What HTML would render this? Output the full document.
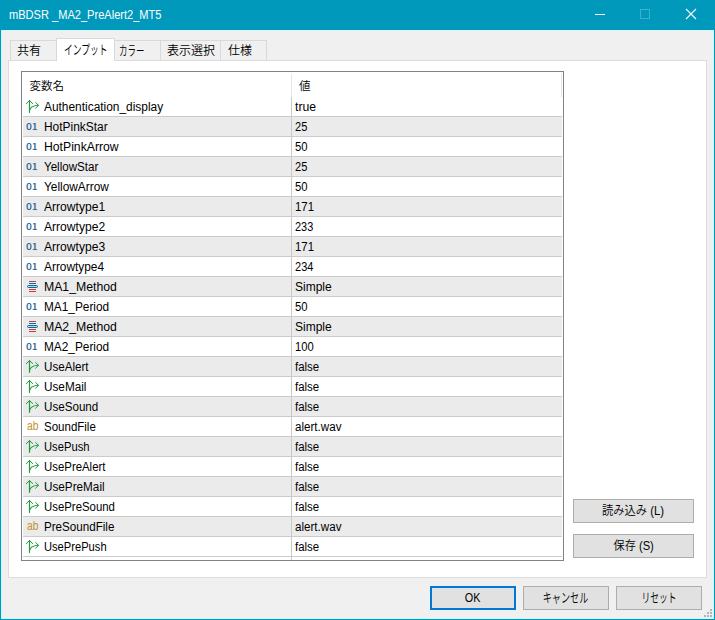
<!DOCTYPE html>
<html lang="ja">
<head>
<meta charset="utf-8">
<title>mBDSR _MA2_PreAlert2_MT5</title>
<style>
html,body{margin:0;padding:0;}
body{width:715px;height:620px;overflow:hidden;background:#f0f0f0;position:relative;
 font-family:"Liberation Sans","Noto Sans CJK JP",sans-serif;font-size:12px;color:#000;font-weight:350;}
div,span{box-sizing:border-box;}
.abs{position:absolute;}
#win{position:absolute;left:0;top:0;width:715px;height:620px;background:#f0f0f0;overflow:hidden;}
#tbar{position:absolute;left:0;top:0;width:715px;height:30px;background:#0099bc;}
#ttl{position:absolute;left:9px;top:7px;color:#fff;font-size:12px;line-height:16px;white-space:nowrap;transform:scaleX(0.922);transform-origin:0 50%;}
.bl{position:absolute;background:#0099bc;}
.bli{position:absolute;background:#c9f6ff;}
.tab{position:absolute;top:40px;height:21px;background:#f0f0f0;border:1px solid #d9d9d9;border-bottom:none;line-height:20px;white-space:nowrap;padding-left:6px;}
.tab.sel{top:38px;height:23px;background:#fff;z-index:3;line-height:21px;}
.kana{display:inline-block;transform-origin:0 50%;}
.btn .kana,.btn .sx{transform-origin:50% 50%;}
.sx{display:inline-block;transform-origin:0 50%;}
#panel{position:absolute;left:8px;top:60px;width:699px;height:518px;background:#fff;border:1px solid #dcdcdc;}
#tbl{position:absolute;left:21px;top:71px;width:543px;height:490px;background:#fff;border:1px solid #808288;overflow:hidden;}
.hd{position:absolute;top:2px;height:24px;line-height:24px;white-space:nowrap;font-size:11.5px;}
.row{position:absolute;left:1px;width:539px;height:20px;}
.row.g{background:#ebebeb;border-top:1px solid #cbcbcb;border-bottom:1px solid #cbcbcb;height:21px;margin-top:-1px;}
.row .nm{position:absolute;left:21px;top:0;line-height:20px;white-space:nowrap;transform-origin:0 50%;}
.row .vl{position:absolute;left:272px;top:0;line-height:20px;white-space:nowrap;transform-origin:0 50%;}
.row .ic{position:absolute;left:1px;top:1px;}
.i01{color:#1f6190;font-family:"Noto Sans CJK JP",sans-serif;font-weight:500;font-size:10px;line-height:18px;left:3.4px !important;top:1.1px !important;transform:scale(1.03,0.86);transform-origin:0 50%;}
.iab{color:#c2922d;font-size:12px;line-height:18px;left:4px !important;top:0px !important;transform:scaleX(0.86);transform-origin:0 50%;}
#vsep{position:absolute;left:269px;top:25px;width:1px;height:470px;background:#c9c9c9;}
#hsep{position:absolute;left:269px;top:2px;width:1px;height:23px;background:#e5e5e5;}
#hsep2{position:absolute;left:539px;top:2px;width:1px;height:23px;background:#e5e5e5;}
.btn{position:absolute;background:#e1e1e1;border:1px solid #adadad;text-align:center;white-space:nowrap;line-height:22px;height:24px;}
.btn.def{border:2px solid #0078d7;line-height:20px;}
.dot{position:absolute;width:2px;height:2px;background:#b4b4b4;}
</style>
</head>
<body>
<div id="win">
<div id="tbar"><div id="ttl">mBDSR _MA2_PreAlert2_MT5</div>
<svg class="abs" style="left:590px;top:4px" width="115" height="22" viewBox="0 0 115 22"><path d="M5 10.5H15" stroke="#fff" stroke-width="1" fill="none"/><rect x="50.5" y="5.5" width="9" height="9" fill="none" stroke="#3fb0cd" stroke-width="1"/><path d="M96 5L106 15M106 5L96 15" stroke="#fff" stroke-width="1.1" fill="none"/></svg>
</div>
<div class="bli" style="left:1px;top:30px;width:1px;height:589px"></div>
<div class="bli" style="left:713px;top:30px;width:1px;height:589px"></div>
<div class="bli" style="left:1px;top:618px;width:713px;height:1px"></div>
<div class="bli" style="left:1px;top:30px;width:713px;height:1px;opacity:.6"></div>
<div class="bl" style="left:0;top:0;width:1px;height:620px"></div>
<div class="bl" style="left:714px;top:0;width:1px;height:620px"></div>
<div class="bl" style="left:0;top:619px;width:715px;height:1px"></div>
<div class="tab" style="left:10px;width:47px;">共有</div>
<div class="tab sel" style="left:56px;width:59px;padding-left:7px"><span class="kana" style="font-size:13px;transform:scaleX(0.675)">インプット</span></div>
<div class="tab" style="left:113px;width:48px;padding-left:5px"><span class="kana" style="font-size:13px;transform:scaleX(0.65)">カラー</span></div>
<div class="tab" style="left:160px;width:61px;">表示選択</div>
<div class="tab" style="left:220px;width:47px;padding-left:7px">仕様</div>
<div id="panel"></div>
<div id="tbl">
<div class="hd" style="left:7.5px">変数名</div>
<div class="hd" style="left:277px">値</div>
<div id="hsep"></div><div id="hsep2"></div>
<div class="row" style="top:25px"><svg class="ic" width="18" height="18" viewBox="0 0 18 18"><g fill="none" stroke="#1f9a3c" stroke-linecap="round" stroke-linejoin="round"><path stroke-width="1.2" d="M5.5 14.3V2.8"/><path stroke-width="1" d="M2.3 5.6L5.5 2.5L8.7 5.6"/><path stroke-width="1.1" d="M5.6 12C6.6 9.2 8.4 7.5 14.2 7.3"/><path stroke-width="1" d="M11.6 4.5L14.5 7.3L11.6 10.2"/></g></svg><span class="nm" style="transform:scaleX(0.992)">Authentication_display</span><span class="vl" style="transform:scaleX(1.020)">true</span></div>
<div class="row g" style="top:45px"><span class="ic i01">01</span><span class="nm" style="transform:scaleX(0.994)">HotPinkStar</span><span class="vl" style="transform:scaleX(0.923)">25</span></div>
<div class="row" style="top:65px"><span class="ic i01">01</span><span class="nm" style="transform:scaleX(1.018)">HotPinkArrow</span><span class="vl" style="transform:scaleX(0.938)">50</span></div>
<div class="row g" style="top:85px"><span class="ic i01">01</span><span class="nm" style="transform:scaleX(0.966)">YellowStar</span><span class="vl" style="transform:scaleX(0.923)">25</span></div>
<div class="row" style="top:105px"><span class="ic i01">01</span><span class="nm" style="transform:scaleX(0.989)">YellowArrow</span><span class="vl" style="transform:scaleX(0.938)">50</span></div>
<div class="row g" style="top:125px"><span class="ic i01">01</span><span class="nm" style="transform:scaleX(1.007)">Arrowtype1</span><span class="vl" style="transform:scaleX(0.947)">171</span></div>
<div class="row" style="top:145px"><span class="ic i01">01</span><span class="nm" style="transform:scaleX(1.007)">Arrowtype2</span><span class="vl" style="transform:scaleX(0.910)">233</span></div>
<div class="row g" style="top:165px"><span class="ic i01">01</span><span class="nm" style="transform:scaleX(1.007)">Arrowtype3</span><span class="vl" style="transform:scaleX(0.947)">171</span></div>
<div class="row" style="top:185px"><span class="ic i01">01</span><span class="nm" style="transform:scaleX(0.990)">Arrowtype4</span><span class="vl" style="transform:scaleX(0.920)">234</span></div>
<div class="row g" style="top:205px"><svg class="ic" width="18" height="18" viewBox="0 0 18 18"><g shape-rendering="crispEdges" opacity="0.55"><rect x="4" y="2" width="9" height="3" fill="#ffe3e3"/><rect x="4" y="4" width="9" height="3" fill="#dff6ff"/><rect x="4" y="10" width="9" height="5" fill="#ffe3e3"/><rect x="2" y="7" width="13" height="3" fill="#dff6ff"/></g><g shape-rendering="crispEdges"><rect x="5" y="3" width="7" height="1" fill="#a04a55"/><rect x="5" y="5" width="7" height="1" fill="#1d5d88"/><rect x="5" y="11" width="7" height="1" fill="#b84545"/><rect x="5" y="13" width="7" height="1" fill="#a04a55"/></g><rect x="3.5" y="7.5" width="10" height="2" rx="1" ry="1" fill="#9be6ff" stroke="#1d5d88" stroke-width="1"/></svg><span class="nm" style="transform:scaleX(1.020)">MA1_Method</span><span class="vl" style="transform:scaleX(1.000)">Simple</span></div>
<div class="row" style="top:225px"><span class="ic i01">01</span><span class="nm" style="transform:scaleX(0.986)">MA1_Period</span><span class="vl" style="transform:scaleX(0.938)">50</span></div>
<div class="row g" style="top:245px"><svg class="ic" width="18" height="18" viewBox="0 0 18 18"><g shape-rendering="crispEdges" opacity="0.55"><rect x="4" y="2" width="9" height="3" fill="#ffe3e3"/><rect x="4" y="4" width="9" height="3" fill="#dff6ff"/><rect x="4" y="10" width="9" height="5" fill="#ffe3e3"/><rect x="2" y="7" width="13" height="3" fill="#dff6ff"/></g><g shape-rendering="crispEdges"><rect x="5" y="3" width="7" height="1" fill="#a04a55"/><rect x="5" y="5" width="7" height="1" fill="#1d5d88"/><rect x="5" y="11" width="7" height="1" fill="#b84545"/><rect x="5" y="13" width="7" height="1" fill="#a04a55"/></g><rect x="3.5" y="7.5" width="10" height="2" rx="1" ry="1" fill="#9be6ff" stroke="#1d5d88" stroke-width="1"/></svg><span class="nm" style="transform:scaleX(1.020)">MA2_Method</span><span class="vl" style="transform:scaleX(1.000)">Simple</span></div>
<div class="row" style="top:265px"><span class="ic i01">01</span><span class="nm" style="transform:scaleX(0.986)">MA2_Period</span><span class="vl" style="transform:scaleX(0.932)">100</span></div>
<div class="row g" style="top:285px"><svg class="ic" width="18" height="18" viewBox="0 0 18 18"><g fill="none" stroke="#1f9a3c" stroke-linecap="round" stroke-linejoin="round"><path stroke-width="1.2" d="M5.5 14.3V2.8"/><path stroke-width="1" d="M2.3 5.6L5.5 2.5L8.7 5.6"/><path stroke-width="1.1" d="M5.6 12C6.6 9.2 8.4 7.5 14.2 7.3"/><path stroke-width="1" d="M11.6 4.5L14.5 7.3L11.6 10.2"/></g></svg><span class="nm" style="transform:scaleX(0.969)">UseAlert</span><span class="vl" style="transform:scaleX(0.952)">false</span></div>
<div class="row" style="top:305px"><svg class="ic" width="18" height="18" viewBox="0 0 18 18"><g fill="none" stroke="#1f9a3c" stroke-linecap="round" stroke-linejoin="round"><path stroke-width="1.2" d="M5.5 14.3V2.8"/><path stroke-width="1" d="M2.3 5.6L5.5 2.5L8.7 5.6"/><path stroke-width="1.1" d="M5.6 12C6.6 9.2 8.4 7.5 14.2 7.3"/><path stroke-width="1" d="M11.6 4.5L14.5 7.3L11.6 10.2"/></g></svg><span class="nm" style="transform:scaleX(0.979)">UseMail</span><span class="vl" style="transform:scaleX(0.952)">false</span></div>
<div class="row g" style="top:325px"><svg class="ic" width="18" height="18" viewBox="0 0 18 18"><g fill="none" stroke="#1f9a3c" stroke-linecap="round" stroke-linejoin="round"><path stroke-width="1.2" d="M5.5 14.3V2.8"/><path stroke-width="1" d="M2.3 5.6L5.5 2.5L8.7 5.6"/><path stroke-width="1.1" d="M5.6 12C6.6 9.2 8.4 7.5 14.2 7.3"/><path stroke-width="1" d="M11.6 4.5L14.5 7.3L11.6 10.2"/></g></svg><span class="nm" style="transform:scaleX(0.969)">UseSound</span><span class="vl" style="transform:scaleX(0.952)">false</span></div>
<div class="row" style="top:345px"><span class="ic iab">ab</span><span class="nm" style="transform:scaleX(0.959)">SoundFile</span><span class="vl" style="transform:scaleX(0.967)">alert.wav</span></div>
<div class="row g" style="top:365px"><svg class="ic" width="18" height="18" viewBox="0 0 18 18"><g fill="none" stroke="#1f9a3c" stroke-linecap="round" stroke-linejoin="round"><path stroke-width="1.2" d="M5.5 14.3V2.8"/><path stroke-width="1" d="M2.3 5.6L5.5 2.5L8.7 5.6"/><path stroke-width="1.1" d="M5.6 12C6.6 9.2 8.4 7.5 14.2 7.3"/><path stroke-width="1" d="M11.6 4.5L14.5 7.3L11.6 10.2"/></g></svg><span class="nm" style="transform:scaleX(0.936)">UsePush</span><span class="vl" style="transform:scaleX(0.952)">false</span></div>
<div class="row" style="top:385px"><svg class="ic" width="18" height="18" viewBox="0 0 18 18"><g fill="none" stroke="#1f9a3c" stroke-linecap="round" stroke-linejoin="round"><path stroke-width="1.2" d="M5.5 14.3V2.8"/><path stroke-width="1" d="M2.3 5.6L5.5 2.5L8.7 5.6"/><path stroke-width="1.1" d="M5.6 12C6.6 9.2 8.4 7.5 14.2 7.3"/><path stroke-width="1" d="M11.6 4.5L14.5 7.3L11.6 10.2"/></g></svg><span class="nm" style="transform:scaleX(0.950)">UsePreAlert</span><span class="vl" style="transform:scaleX(0.952)">false</span></div>
<div class="row g" style="top:405px"><svg class="ic" width="18" height="18" viewBox="0 0 18 18"><g fill="none" stroke="#1f9a3c" stroke-linecap="round" stroke-linejoin="round"><path stroke-width="1.2" d="M5.5 14.3V2.8"/><path stroke-width="1" d="M2.3 5.6L5.5 2.5L8.7 5.6"/><path stroke-width="1.1" d="M5.6 12C6.6 9.2 8.4 7.5 14.2 7.3"/><path stroke-width="1" d="M11.6 4.5L14.5 7.3L11.6 10.2"/></g></svg><span class="nm" style="transform:scaleX(0.977)">UsePreMail</span><span class="vl" style="transform:scaleX(0.952)">false</span></div>
<div class="row" style="top:425px"><svg class="ic" width="18" height="18" viewBox="0 0 18 18"><g fill="none" stroke="#1f9a3c" stroke-linecap="round" stroke-linejoin="round"><path stroke-width="1.2" d="M5.5 14.3V2.8"/><path stroke-width="1" d="M2.3 5.6L5.5 2.5L8.7 5.6"/><path stroke-width="1.1" d="M5.6 12C6.6 9.2 8.4 7.5 14.2 7.3"/><path stroke-width="1" d="M11.6 4.5L14.5 7.3L11.6 10.2"/></g></svg><span class="nm" style="transform:scaleX(0.949)">UsePreSound</span><span class="vl" style="transform:scaleX(0.952)">false</span></div>
<div class="row g" style="top:445px"><span class="ic iab">ab</span><span class="nm" style="transform:scaleX(0.968)">PreSoundFile</span><span class="vl" style="transform:scaleX(0.967)">alert.wav</span></div>
<div class="row" style="top:465px"><svg class="ic" width="18" height="18" viewBox="0 0 18 18"><g fill="none" stroke="#1f9a3c" stroke-linecap="round" stroke-linejoin="round"><path stroke-width="1.2" d="M5.5 14.3V2.8"/><path stroke-width="1" d="M2.3 5.6L5.5 2.5L8.7 5.6"/><path stroke-width="1.1" d="M5.6 12C6.6 9.2 8.4 7.5 14.2 7.3"/><path stroke-width="1" d="M11.6 4.5L14.5 7.3L11.6 10.2"/></g></svg><span class="nm" style="transform:scaleX(0.929)">UsePrePush</span><span class="vl" style="transform:scaleX(0.952)">false</span></div>
<div class="abs" style="left:1px;top:484px;width:539px;height:1px;background:#cbcbcb"></div>
<div id="vsep"></div>
</div>
<div class="btn" style="left:573px;top:499px;width:121px;"><span class="sx" style="transform:scaleX(0.94)">読み込み (L)</span></div>
<div class="btn" style="left:573px;top:534px;width:121px;"><span class="sx" style="transform:scaleX(0.93)">保存 (S)</span></div>
<div class="btn def" style="left:430px;top:586px;width:86px;"><span class="sx" style="transform:scaleX(0.9)">OK</span></div>
<div class="btn" style="left:523px;top:586px;width:86px;"><span class="kana" style="font-size:13px;transform:scaleX(0.70)">キャンセル</span></div>
<div class="btn" style="left:616px;top:586px;width:86px;"><span class="kana" style="font-size:13px;transform:scaleX(0.675)">リセット</span></div>
<div class="dot" style="left:710px;top:609px"></div><div class="dot" style="left:707px;top:612px"></div><div class="dot" style="left:710px;top:612px"></div><div class="dot" style="left:704px;top:615px"></div><div class="dot" style="left:707px;top:615px"></div><div class="dot" style="left:710px;top:615px"></div>
</div>
</body>
</html>
